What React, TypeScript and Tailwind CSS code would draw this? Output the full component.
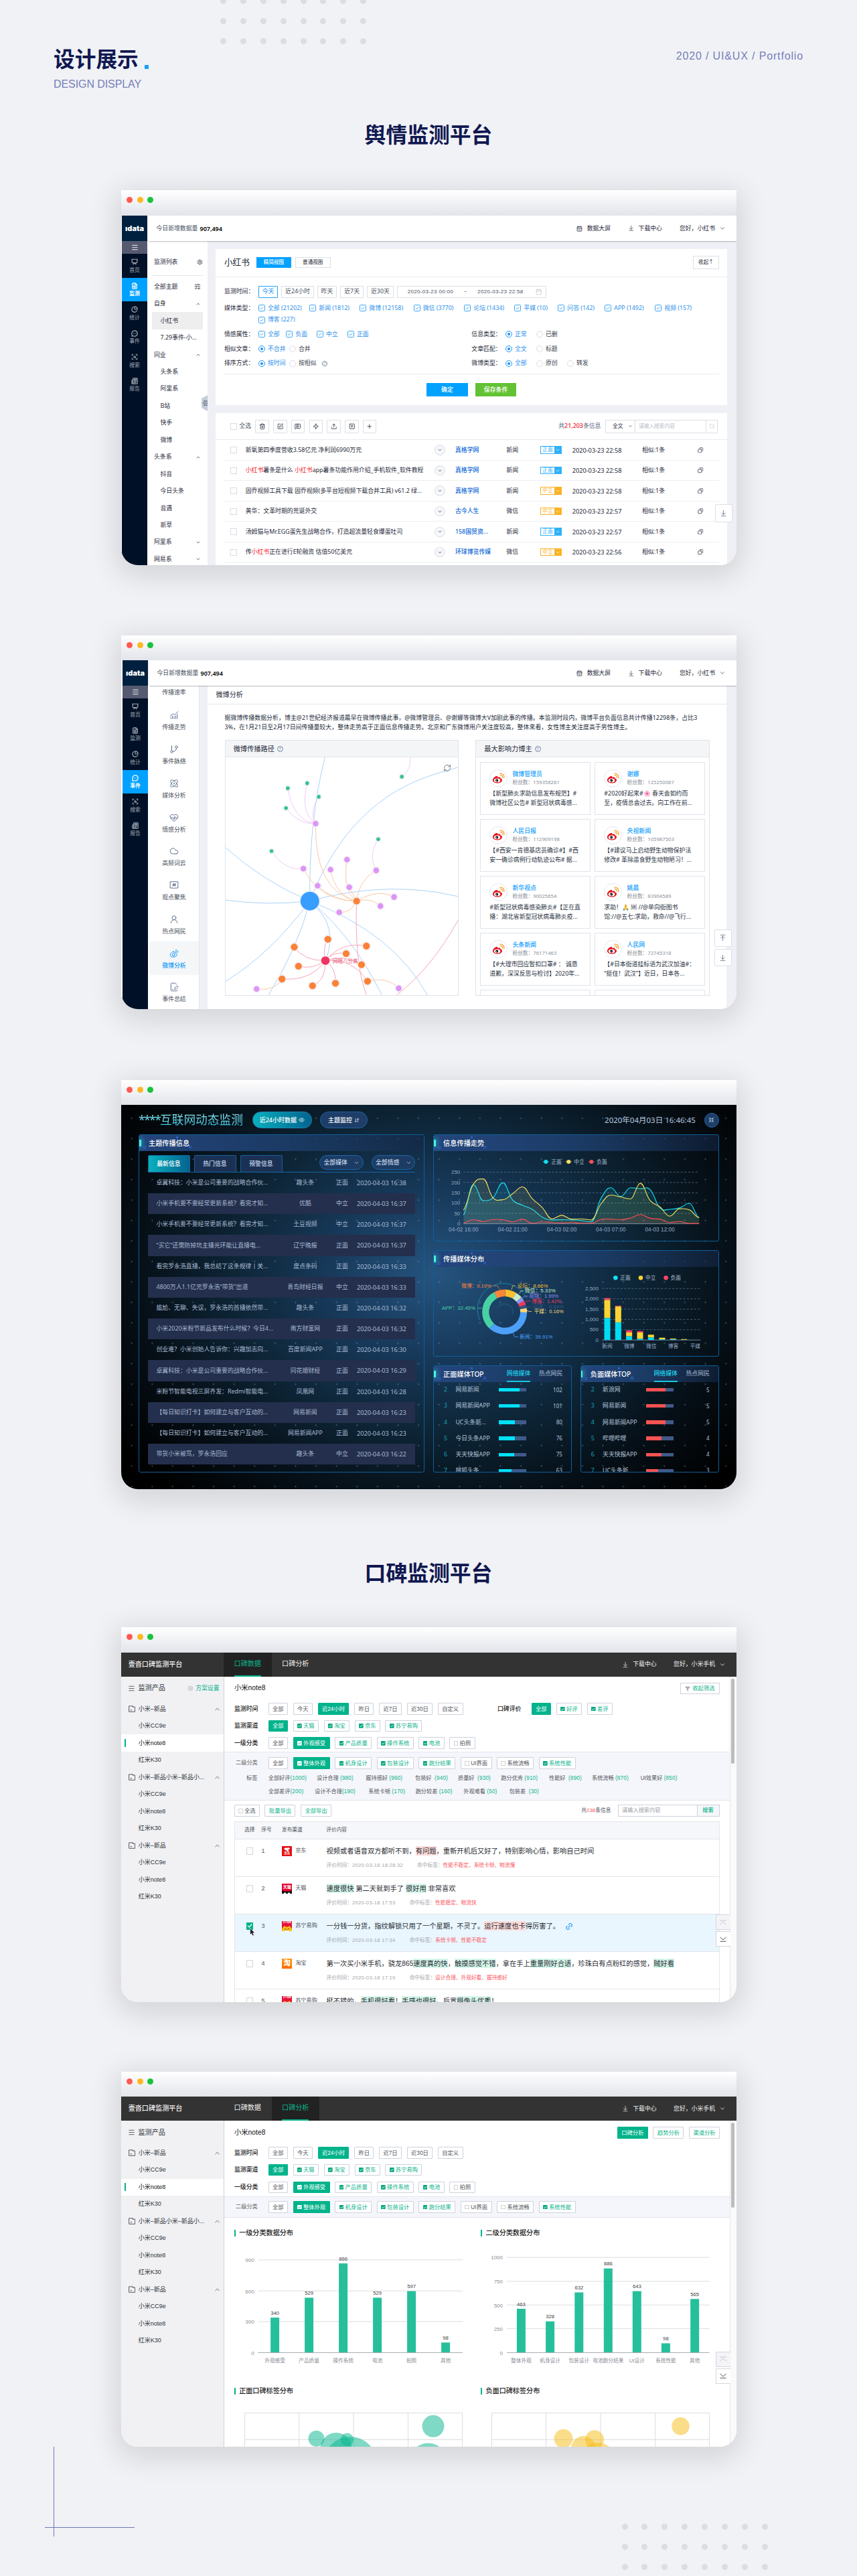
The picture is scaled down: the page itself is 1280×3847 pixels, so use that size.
import React from "react";
import {
  Menu, ChevronDown, ChevronUp, Settings, SlidersHorizontal, Trash2, SquarePen, MessageSquareText, Zap,
  Plus, Search, Calendar, Copy, RefreshCw, Presentation, ChartNoAxesCombined, Atom, HeartPulse,
  Cloud, UserRound, FilePenLine, GitBranch, Eye, ArrowDownUp, Shrink, Filter, Link2, ArrowDownToLine,
  ArrowUpToLine, Upload, SquareArrowUp, CalendarDays, FileText, ChartPie, Newspaper, ScanSearch, MessageCircleMore,
} from "lucide-react";

const row = "flex items-center whitespace-nowrap [&>*]:shrink-0";
const sansA = "font-['Noto_Sans','Noto_Sans_CJK_SC',sans-serif]";
const sansB = "font-['Liberation_Sans','Noto_Sans_CJK_SC',sans-serif]";

/* ---------- shared window frame ---------- */

function Frame({ className, chrome, body, children }: { className: string; chrome: string; body: string; children: React.ReactNode }) {
  return (
    <section className={`ml-[181px] w-[918.5px] rounded-b-[25px] shadow-[0_10px_42px_8px_rgba(0,0,0,0.12)] ${className}`}>
      <div className={`flex items-start gap-[6.5px] bg-gradient-to-b from-white to-[#e2e4eb] pl-[8px] pt-[10px] ${chrome}`}>
        <i className="size-[9px] rounded-full bg-[#ff5a50]" />
        <i className="size-[9px] rounded-full bg-[#fdb923]" />
        <i className="size-[9px] rounded-full bg-[#18c33c]" />
      </div>
      <div className={`relative overflow-hidden rounded-b-[25px] bg-white leading-none ${body}`}>{children}</div>
    </section>
  );
}

function DotGrid({ className, rows }: { className: string; rows: number }) {
  return (
    <div className={`absolute grid grid-cols-8 gap-x-[20.9px] gap-y-[20.9px] ${className}`}>
      {Array.from({ length: rows * 8 }, (_, i) => (
        <i key={i} className="size-[9px] rounded-full bg-[#dcdce4]" />
      ))}
    </div>
  );
}

/* ---------- idata shell ---------- */

const mainNav = [
  { name: "首页", Icon: Presentation },
  { name: "监测", Icon: FileText },
  { name: "统计", Icon: ChartPie },
  { name: "事件", Icon: MessageCircleMore },
  { name: "搜索", Icon: ScanSearch },
  { name: "报告", Icon: Newspaper },
];

function DataShell({ active, inset, children }: { active: string; inset: string; children: React.ReactNode }) {
  return (
    <div className={`flex h-full text-[#1f2a3a] ${sansA} ${inset}`}>
      <aside className="w-[38px] shrink-0 bg-[#001127]">
        <div className="flex h-[38px] items-center justify-center bg-[#00203f] font-['Inter',sans-serif] text-[11px] font-black text-white">
          <span>ıdata</span>
        </div>
        <div className="flex h-[19px] items-center justify-center bg-[#555a70]">
          <Menu className="size-[11px] text-[#d5d8e0]" strokeWidth={2.6} />
        </div>
        {mainNav.map(({ name, Icon }) => (
          <div
            key={name}
            className={`flex h-[35.5px] flex-col items-center gap-[3.5px] pt-[7px] text-[7.8px] ${
              name === active ? "bg-[#00a1ff] font-bold text-white" : "text-[#a4aab4]"
            }`}
          >
            <Icon className="size-[10px]" strokeWidth={2.8} />
            <span>{name}</span>
          </div>
        ))}
      </aside>
      <div className="flex min-w-0 flex-1 flex-col">
        <header className={`${row} relative z-10 ml-[2px] h-[38px] bg-white pl-[11.5px] text-[8.85px] shadow-[0_1px_1.5px_rgba(0,0,0,0.28)]`}>
          <span className="w-[65px] text-[#48525f]">今日新增数据量</span>
          <b className="text-[9px] font-semibold text-black">907,494</b>
          <span className="flex-1" />
          <CalendarDays className="mr-[6.5px] size-[9px]" />
          <span className="mr-[26px]">数据大屏</span>
          <ArrowDownToLine className="mr-[6px] size-[9.5px]" strokeWidth={1.6} />
          <span className="mr-[26px]">下载中心</span>
          <span className="mr-[6px]">您好，小红书</span>
          <ChevronDown className="mr-[15.5px] size-[10px]" strokeWidth={1.6} />
        </header>
        <div className="flex min-h-0 flex-1">{children}</div>
      </div>
    </div>
  );
}

/* ---------- window 1 ---------- */

const topics: [string, "up" | "down" | "item" | "on"][] = [
  ["自身", "up"], ["小红书", "on"], ["7.29事件-小...", "item"], ["同业", "up"], ["头条系", "item"], ["阿里系", "item"],
  ["B站", "item"], ["快手", "item"], ["微博", "item"], ["头条系", "up"], ["抖音", "item"], ["今日头条", "item"],
  ["音遇", "item"], ["新草", "item"], ["阿里系", "down"], ["网易系", "down"],
];

function Tick({ label, w }: { label: string; w: string }) {
  return (
    <span className={`${row} ${w} text-[#2b90ea]`}>
      <span className="mr-[4px] flex h-[10px] w-[10px] items-center justify-center rounded-[1.5px] border border-[#3aa6f2]">
        <svg viewBox="0 0 8 8" className="size-[6px]"><path d="M1 4l2 2 4-4" fill="none" stroke="#2196f3" strokeWidth="1.2" /></svg>
      </span>
      {label}
    </span>
  );
}

function Radio({ label, w, on }: { label: string; w: string; on?: boolean }) {
  return (
    <span className={`${row} ${w} ${on ? "text-[#2b90ea]" : "text-[#3b4450]"}`}>
      <span className={`mr-[4px] flex size-[10px] items-center justify-center rounded-full border ${on ? "border-[#2196f3]" : "border-[#d9dce4]"}`}>
        {on && <i className="size-[4px] rounded-full bg-[#1890ff]" />}
      </span>
      {label}
    </span>
  );
}

function Q({ className = "" }: { className?: string }) {
  return (
    <span className={`flex items-center justify-center rounded-full border border-current text-[#7484a0] ${className}`}>?</span>
  );
}

function R({ children }: { children: React.ReactNode }) {
  return <span className="text-[#f5222d]">{children}</span>;
}

const articles: [React.ReactNode, string, string, string, string][] = [
  ["新氧第四季度营收3.58亿元 净利润6990万元", "真格学网", "新闻", "正面", "22:58"],
  [<><R>小红书</R>薯条是什么 <R>小红书</R>app薯条功能作用介绍_手机软件_软件教程</>, "真格学网", "新闻", "正面", "22:58"],
  ["固乔视频工具下载 固乔视频(多平台短视频下载合并工具) v61.2 绿...", "真格学网", "新闻", "中立", "22:58"],
  ["黄华：文革时期的荒诞外交", "古今人生", "微信", "中立", "22:57"],
  ["汤姆猫与Mr.EGG蛋先生战略合作，打造超流量轻食爆蛋吐司", "158国贸资...", "新闻", "正面", "22:57"],
  [<>传<R>小红书</R>正在进行E轮融资 估值50亿美元</>, "环球博览传媒", "微信", "中立", "22:56"],
];

function MonitorWindow() {
  const btn = "flex h-[18px] items-center justify-center rounded-[1px] border border-[#dcdfe6] text-[#4a525e]";
  return (
    <Frame className="h-[560px]" chrome="h-[38px]" body="h-[522px]">
      <DataShell active="监测" inset="pl-[1px]">
        <div className="relative ml-[2px] w-[88px] shrink-0 bg-white text-[8.9px]">
          <div className={`${row} ml-[5px] h-[51.5px] w-[76px] border-b border-[#e4e6ea] pl-[3px] pt-[13px]`}>
            <span className="flex-1">监测列表</span>
            <Settings className="size-[9px]" strokeWidth={2} />
          </div>
          <div className={`${row} h-[29.5px] pl-[8px] pt-[4px]`}>
            <span className="w-[60px]">全部主题</span>
            <SlidersHorizontal className="size-[10px]" strokeWidth={2} />
          </div>
          {topics.map(([name, kind], i) => (
            <div
              key={i}
              className={`${row} ml-[5px] h-[25.45px] w-[76px] ${kind === "up" || kind === "down" ? "pl-[3px]" : "pl-[12.5px]"} ${kind === "on" ? "bg-[#eeeeef]" : ""}`}
            >
              <span className="flex-1">{name}</span>
              {kind === "up" && <ChevronUp className="mr-[3px] size-[8px]" />}
              {kind === "down" && <ChevronDown className="mr-[3px] size-[8px]" />}
            </div>
          ))}
          <svg viewBox="0 0 9 24" className="absolute right-0 top-[230px] h-[24px] w-[9px]">
            <path d="M9 0v24L0 19V5z" fill="#c6ccd8" />
            <path d="M3 9h6M5 12h4M3 15h6M4.500 10.500l-2 1.500 2 1.500" stroke="#3a4352" strokeWidth=".9" fill="none" />
          </svg>
        </div>
        <div className="flex-1 bg-[#eff0f5] pl-[12px] pt-[11.6px]">
          <div className="h-[233.2px] w-[764px] bg-white text-[8.9px]">
            <div className={`${row} h-[42px] border-b border-[#e8eaee] pl-[13px] pr-[12px]`}>
              <span className="w-[48px] text-[12.6px]">小红书</span>
              <span className="mr-[6px] flex h-[15.5px] w-[52px] items-center justify-center bg-[#00a1ff] text-[7.6px] font-medium text-white">精简视图</span>
              <span className="flex h-[15.5px] w-[52.5px] items-center justify-center border border-[#dcdfe6] text-[7.6px]">普通视图</span>
              <span className="flex-1" />
              <span className="flex h-[20.5px] w-[39px] items-center justify-center border border-[#dcdfe6] text-[7.6px]">收起↑</span>
            </div>
            <div className={`${row} h-[36px] pl-[13px] pt-[8px]`}>
              <span className="w-[51px]">监测时间：</span>
              <span className={`${btn} mr-[5.3px] w-[29px] border-[#22a4f5]! text-[#1890ff]!`}>今天</span>
              <span className={`${btn} mr-[5.3px] w-[48.4px]`}>近24小时</span>
              <span className={`${btn} mr-[5.3px] w-[29px]`}>昨天</span>
              <span className={`${btn} mr-[5.3px] w-[34.7px]`}>近7天</span>
              <span className={`${btn} mr-[5.6px] w-[39.4px]`}>近30天</span>
              <span className={`${row} h-[18px] w-[222.4px] border border-[#dcdfe6] pl-[14.5px] font-['Liberation_Sans',sans-serif] text-[8px] tracking-[0.32px] text-[#4a525e]`}>
                <span className="w-[84px]">2020-03-23 00:00</span>
                <span className="w-[20.500px]">~</span>
                <span className="w-[87px]">2020-03-23 22:58</span>
                <Calendar className="size-[9.500px] text-[#b8bcc6]" strokeWidth={1.6} />
              </span>
            </div>
            <div className={`${row} h-[21.600px] pl-[13px]`}>
              <span className="w-[51px]">媒体类型：</span>
              <Tick label="全部 (21202)" w="w-[76.3px]" />
              <Tick label="新闻 (1812)" w="w-[75px]" />
              <Tick label="微博 (12158)" w="w-[80.400px]" />
              <Tick label="微信 (3770)" w="w-[75.6px]" />
              <Tick label="论坛 (1434)" w="w-[75px]" />
              <Tick label="平媒 (10)" w="w-[65px]" />
              <Tick label="问答 (142)" w="w-[70px]" />
              <Tick label="APP (1492)" w="w-[75px]" />
              <Tick label="视频 (157)" w="w-[60px]" />
            </div>
            <div className={`${row} h-[13px] pl-[64px]`}>
              <Tick label="博客 (227)" w="w-[76px]" />
            </div>
            <div className={`${row} h-[27px] pl-[13px] pt-[3.600px]`}>
              <span className="w-[51px]">情感属性：</span>
              <Tick label="全部" w="w-[41.3px]" />
              <Tick label="负面" w="w-[45.700px]" />
              <Tick label="中立" w="w-[46px]" />
              <Tick label="正面" w="w-[185.3px]" />
              <span className="w-[50.7px]">信息类型：</span>
              <Radio on label="正常" w="w-[46px]" />
              <Radio label="已删" w="w-[46px]" />
            </div>
            <div className={`${row} h-[20.600px] pl-[13px]`}>
              <span className="w-[51px]">相似文章：</span>
              <Radio on label="不合并" w="w-[46px]" />
              <Radio label="合并" w="w-[272.3px]" />
              <span className="w-[50.7px]">文章匹配：</span>
              <Radio on label="全文" w="w-[46px]" />
              <Radio label="标题" w="w-[46px]" />
            </div>
            <div className={`${row} ml-[13px] h-[27.500px] w-[738.500px] border-b border-[#e8eaee] pb-[5px]`}>
              <span className="w-[51px]">排序方式：</span>
              <Radio on label="按时间" w="w-[46px]" />
              <Radio label="按相似" w="w-[49px]" />
              <Q className="size-[8px] text-[6px]" />
              <span className="w-[215.3px]" />
              <span className="w-[50.7px]">微博类型：</span>
              <Radio on label="全部" w="w-[46px]" />
              <Radio label="原创" w="w-[46px]" />
              <Radio label="转发" w="w-[46px]" />
            </div>
            <div className="flex gap-[11.300px] pl-[315.300px] pt-[12.700px] font-medium text-white">
              <span className="flex h-[20.400px] w-[61.300px] items-center justify-center bg-[#00a1ff]">确定</span>
              <span className="flex h-[20.400px] w-[61.300px] items-center justify-center bg-[#62c234]">保存条件</span>
            </div>
          </div>

          <div className="mt-[12.600px] h-[240px] w-[764px] bg-white text-[8.9px]">
            <div className={`${row} h-[40px] border-b border-[#e8eaee] pl-[22px]`}>
              <i className="mr-[3.300px] size-[10px] border border-[#d9dce4]" />
              <span className="w-[24px] text-[#4a525e]">全选</span>
              {[Trash2, SquarePen, MessageSquareText, Zap, Upload, SquareArrowUp, Plus].map((I, i) => (
                <span key={i} className="mr-[6.150px] flex size-[20.600px] items-center justify-center rounded-[1px] border border-[#dcdfe6]">
                  <I className="size-[9.500px]" />
                </span>
              ))}
              <span className="flex-1" />
              <span className="mr-[6.5px] text-[#5c6b84]">共<span className="font-medium text-[#f5121d]">21,203</span>条信息</span>
              <span className={`${row} mr-[14px] h-[20.700px] w-[168px] border border-[#dcdfe6] text-[7.700px]`}>
                <span className={`${row} h-full w-[44px] border-r border-[#dcdfe6] pl-[10px]`}>
                  <span className="w-[23px]">全文</span>
                  <ChevronDown className="size-[7px]" />
                </span>
                <span className="w-[105px] pl-[5px] text-[#b9bec9]">请输入搜索内容</span>
                <span className="flex h-full flex-1 items-center justify-center border-l border-[#dcdfe6]">
                  <Search className="size-[9px] text-[#c0c4cc]" strokeWidth={1.6} />
                </span>
              </span>
            </div>
            {articles.map(([title, src, type, mood, time], i) => (
              <div key={i} className={`${row} ml-[13px] h-[30.520px] w-[738.700px] border-b border-[#eceef2] pl-[9px]`}>
                <i className="mr-[12.700px] size-[10px] border border-[#d9dce4]" />
                <span className="w-[282.600px]">{title}</span>
                <span className="mr-[15.300px] flex size-[15.400px] items-center justify-center rounded-full border border-[#dadde6] bg-[#f6f7fa]">
                  <ChevronDown className="size-[8px]" />
                </span>
                <span className="w-[76.300px] font-medium text-[#0f6ad6]">{src}</span>
                <span className="w-[50.700px]">{type}</span>
                <span className={`flex h-[11.500px] w-[32px] border text-[7.700px] ${mood === "正面" ? "border-[#2fb1f8] text-[#2fb1f8]" : "border-[#fbb224] text-[#fbb224]"}`}>
                  <span className="flex flex-1 items-center justify-center">{mood}</span>
                  <span className={`flex w-[10px] items-center justify-center ${mood === "正面" ? "bg-[#2fb1f8]" : "bg-[#fbb224]"}`}>
                    <ChevronDown className="size-[8px] text-white" />
                  </span>
                </span>
                <span className="ml-[15.700px] w-[104.300px] text-[9.200px]">2020-03-23 {time}</span>
                <span className="w-[83px]">相似:1条</span>
                <Copy className="size-[8.500px] -scale-x-100" />
              </div>
            ))}
          </div>
        </div>
      </DataShell>
      <span className="absolute right-[5.500px] top-[431.400px] z-20 flex size-[26.400px] items-center justify-center rounded-[2px] border border-[#dcdfe6] bg-white">
        <ArrowDownToLine className="size-[11px] text-[#4a5672]" strokeWidth={1.6} />
      </span>
    </Frame>
  );
}

/* ---------- window 2 ---------- */

type IconProps = { className?: string; strokeWidth?: number };

function TopicBubble({ className, strokeWidth }: IconProps) {
  return (
    <svg viewBox="0 0 24 24" className={className} fill="none" stroke="currentColor" strokeWidth={strokeWidth} strokeLinejoin="round">
      <path d="M2 3h20v16h-8l-2 2-2-2H2z" />
      <path d="M11 7l-1.500 8M15 7l-1.500 8M8 9.500h9M7.500 12.500h9" />
    </svg>
  );
}

function WeiboOutline({ className, strokeWidth }: IconProps) {
  return (
    <svg viewBox="0 0 24 24" className={className} fill="none" stroke="currentColor" strokeWidth={strokeWidth} strokeLinecap="round">
      <path d="M10 7c-4 1.500-8 5-8 8.500C2 19 6 21 10.500 21s9-2.500 9-6c0-2-1.500-3-3.500-3.500.8-2.500-.5-3.500-4-2.300C12.500 7.500 12 6.500 10 7z" />
      <circle cx="10.500" cy="15" r="3.200" />
      <path d="M16 3c3.500-.5 6.500 2.500 5.800 6M15.800 6.300c1.700-.2 3 1 2.700 2.700" />
    </svg>
  );
}

const subNav = [
  { name: "传播走势", Icon: ChartNoAxesCombined },
  { name: "事件脉络", Icon: GitBranch },
  { name: "媒体分析", Icon: Atom },
  { name: "情感分析", Icon: HeartPulse },
  { name: "高频词云", Icon: Cloud },
  { name: "观点聚焦", Icon: TopicBubble },
  { name: "热点网民", Icon: UserRound },
  { name: "微博分析", Icon: WeiboOutline },
  { name: "事件总结", Icon: FilePenLine },
];

const bloggers = [
  ["微博管理员", "159358261", "【新型肺炎求助信息发布规范】#", "微博社区公告# 新型冠状病毒感..."],
  ["谢娜", "125250067", "#2020好起来#🌸 春天会如约而", "至，疫情总会过去。向工作在前..."],
  ["人民日报", "112909198", "【#西安一肯德基店员确诊#】#西", "安一确诊病例行动轨迹公布# 据..."],
  ["央视新闻", "105987503", "【#建议马上启动野生动物保护法", "修改# 革除滥食野生动物陋习！..."],
  ["新华视点", "90025654", "#新型冠状病毒感染肺炎#【正在直", "播：湖北省新型冠状病毒肺炎疫..."],
  ["姚晨", "83904589", "求助！🙏 🆘 //@单向街图书", "馆://@五七:求助，救命//@飞行..."],
  ["头条新闻", "76171463", "【#大理市回应暂扣口罩# ： 诚恳", "道歉，深深反思与检讨】2020年..."],
  ["人民网", "72745318", "【#日本街道挂标语为武汉加油#：", "“挺住！武汉”】近日，日本各..."],
];

function WeiboLogo() {
  return (
    <svg viewBox="0 0 27 27" className="size-[26.700px]">
      <circle cx="13.500" cy="13.500" r="13" fill="#fff" stroke="#dfe4ee" strokeWidth=".9" />
      <path d="M5 16.500c0-3 4-6.500 6.500-6.300 1.200.1 1.300 1 1 2 2-.8 4.500-.9 4 1.400 1.800.3 3 1.300 2.700 3-.4 2.300-3.500 4.200-7.200 4.200C8.300 20.800 5 19.200 5 16.500z" fill="#e6101b" />
      <ellipse cx="11.700" cy="16.600" rx="4.800" ry="3" fill="#fff" />
      <circle cx="11.200" cy="16.800" r="2.100" fill="#111" />
      <circle cx="10.500" cy="17.200" r=".7" fill="#fff" />
      <path d="M16.500 8.800c2-.3 3.700 1.500 3.100 3.500M15.800 6.300c3.800-.8 7.300 2.700 6.100 6.600" fill="none" stroke="#f79c23" strokeWidth="1.200" strokeLinecap="round" />
    </svg>
  );
}

const nodes: [number, number, number, string][] = [
  [1288, 586, 2.8, "#35bf98"], [776, 632, 2.8, "#35bf98"], [863, 612, 2.8, "#35bf98"], [915, 666, 2.8, "#35bf98"],
  [768, 711, 2.8, "#35bf98"], [1182, 835, 2.8, "#35bf98"], [703, 882, 2.8, "#35bf98"],
  [901, 773, 4.300, "#dd94f5"], [1042, 916, 4.300, "#dd94f5"], [846, 952, 4.300, "#dd94f5"], [968, 956, 4.300, "#dd94f5"],
  [1173, 959, 4.300, "#dd94f5"], [910, 1020, 4.300, "#dd94f5"], [1052, 1026, 4.300, "#dd94f5"], [1253, 1065, 4.300, "#dd94f5"],
  [1192, 1101, 4.300, "#dd94f5"], [1007, 1126, 4.300, "#dd94f5"], [636, 1431, 4.300, "#dd94f5"], [1274, 1428, 4.300, "#dd94f5"],
  [1085, 1081, 5.200, "#fb8138"], [956, 1233, 5.200, "#fb8138"], [805, 1264, 5.200, "#fb8138"], [1129, 1260, 5.200, "#fb8138"],
  [1038, 1290, 5.200, "#fb8138"], [824, 1340, 5.200, "#fb8138"], [1107, 1334, 5.200, "#fb8138"], [750, 1391, 5.200, "#fb8138"],
  [990, 1408, 5.200, "#fb8138"], [887, 1418, 5.200, "#fb8138"], [1134, 1400, 5.200, "#fb8138"],
  [945, 1318, 6.400, "#f0335f"], [875, 1081, 14, "#379dff"],
];

const edges: [string, string][] = [
  ["#a9d3fb", "M943 509Q870 760 875 1081M497 868Q660 1000 875 1081M497 1077Q680 1100 875 1081M497 1400Q700 1290 875 1081M690 1454Q820 1270 875 1081M875 1081Q1050 680 1440 575L1543 548M875 1081Q1160 1010 1440 1045L1543 1063M875 1081Q1250 1210 1402 1454M875 1081Q1060 1210 1198 1454M875 1081Q1010 1180 945 1318"],
  ["#efcdf9", "M1327 509Q1330 560 1288 586M776 632Q800 760 901 773M863 612Q830 730 901 773M915 666Q870 730 901 773M768 711Q820 775 901 773M1182 835Q1135 900 1173 959M703 882Q760 960 846 952"],
  ["#fbc9a8", "M901 773Q895 1040 1085 1081M846 952Q920 1080 1085 1081M968 956Q990 1060 1085 1081M910 1020Q980 1080 1085 1081M1042 916Q1020 1040 1085 1081M1052 1026L1085 1081M1173 959Q1095 1000 1085 1081M1085 1081Q1180 1030 1253 1065M1085 1081Q1150 1065 1192 1101M1085 1081Q1060 1130 1007 1126M636 1431Q720 1440 750 1391M1134 1400Q1220 1380 1274 1428"],
  ["#f6a6b8", "M945 1318Q850 1320 805 1264M945 1318Q930 1270 956 1233M945 1318Q890 1355 824 1340M945 1318Q880 1400 750 1391M945 1318Q945 1400 887 1418M945 1318Q995 1350 990 1408M945 1318Q980 1280 1038 1290M945 1318Q1020 1240 1129 1260M945 1318Q1070 1310 1134 1400M945 1318Q1030 1290 1107 1334M1085 1081Q1075 1330 1129 1454M1266 1454Q1420 1350 1543 1154"],
];

function SpreadGraph() {
  const sx = 348 / 1046;
  const sy = 355 / 946;
  return (
    <svg viewBox="0 0 348 355" className="h-[355px] w-[348px]">
      <g transform={`scale(${sx} ${sy}) translate(-497 -509)`} fill="none">
        {edges.map(([c, d]) => (
          <path key={c} d={d} stroke={c} strokeWidth="1" vectorEffect="non-scaling-stroke" />
        ))}
      </g>
      {nodes.map(([x, y, r, c], i) => (
        <g key={i}>
          <circle cx={(x - 497) * sx} cy={(y - 509) * sy} r={r + 1.200} fill="#fff" stroke="#d8d8dc" strokeWidth=".5" />
          <circle cx={(x - 497) * sx} cy={(y - 509) * sy} r={r} fill={c} />
        </g>
      ))}
      <text x={160} y={307} fontSize="7.500" fill="#e84a6c">网眼八分高</text>
    </svg>
  );
}

function WeiboWindow() {
  const float = "flex size-[26.300px] items-center justify-center rounded-[2px] border border-[#dcdfe6] bg-white";
  return (
    <Frame className="mt-[105px] h-[558px]" chrome="h-[37.300px]" body="h-[520.700px]">
      <DataShell active="事件" inset="pl-[2px]">
        <div className="ml-[2px] w-[74px] shrink-0 text-[8.9px] text-[#4c535e]">
          <div className="flex h-[26px] items-center justify-center pb-[5px]">传播速率</div>
          {subNav.map(({ name, Icon }) => (
            <div key={name} className={`flex h-[50.750px] flex-col items-center gap-[7px] pt-[11px] ${name === "微博分析" ? "bg-[#f4f6f8] font-medium text-[#139cf5]" : ""}`}>
              <Icon className={`size-[14px] ${name === "微博分析" ? "" : "text-[#60718f]"}`} strokeWidth={1.700} />
              <span>{name}</span>
            </div>
          ))}
        </div>
        <div className="w-[13px] shrink-0 border-l border-[#e2e5ee] bg-[#eff0f5]" />
        <div className="w-[775px] shrink-0 text-[8.9px]">
          <div className={`${row} h-[27.500px] border-b border-[#e4e6ea] pl-[12.500px] pb-[2px] text-[10.100px]`}>微博分析</div>
          <div className="whitespace-nowrap pl-[25.500px] pt-[13px] leading-[14px] tracking-[0.070px] text-[#222b3a]">
            <p>据微博传播数据分析，博主@21世纪经济报道最早在微博传播此事，@微博管理员、@谢娜等微博大V加剧此事的传播。本监测时段内，微博平台负面信息共计传播12298条，占比3</p>
            <p>3%，在1月21日至2月17日间传播量较大，整体走势高于正面信息传播走势。北京和广东微博用户关注度较高，整体来看，女性博主关注度高于男性博主。</p>
          </div>
          <div className="ml-[25.700px] mt-[12.500px] flex gap-[25.600px]">
            <div className="h-[382px] w-[349px] overflow-hidden border border-[#dfe3ec]">
              <div className={`${row} h-[25px] border-b border-[#e4e7ee] bg-[#f4f5f7] pl-[12px] text-[10.200px]`}>
                微博传播路径<Q className="ml-[4px] size-[9px] text-[7px]" />
              </div>
              <div className="relative">
                <SpreadGraph />
                <RefreshCw className="absolute right-[10px] top-[10px] size-[12px] text-[#555]" strokeWidth={1.500} />
              </div>
            </div>
            <div className="h-[382px] w-[349.500px] overflow-hidden border border-[#dfe3ec]">
              <div className={`${row} h-[25px] border-b border-[#e4e7ee] bg-[#f4f5f7] pl-[12px] text-[10.200px]`}>
                最大影响力博主<Q className="ml-[4px] size-[9px] text-[7px]" />
              </div>
              <div className="grid grid-cols-2 gap-x-[6.600px] gap-y-[6.500px] px-[6px] pt-[6.800px]">
                {bloggers.map(([name, fans, l1, l2]) => (
                  <div key={name} className="h-[78.600px] overflow-hidden border border-[#dfe3ec] pl-[13px] pt-[10px]">
                    <div className="flex gap-[7.500px]">
                      <WeiboLogo />
                      <div className="whitespace-nowrap pt-[3px]">
                        <p className="font-medium text-[#16a0fa]">{name}</p>
                        <p className="mt-[4px] text-[7.700px] text-[#8a8f98]">粉丝数：{fans}</p>
                      </div>
                    </div>
                    <div className="mt-[2px] whitespace-nowrap leading-[14.200px] text-[#27303e]">
                      <p>{l1}</p>
                      <p>{l2}</p>
                    </div>
                  </div>
                ))}
                <div className="h-[20px] border border-[#dfe3ec]" />
                <div className="h-[20px] border border-[#dfe3ec]" />
              </div>
            </div>
          </div>
        </div>
        <div className="flex-1 bg-[#eff0f5]" />
      </DataShell>
      <div className="absolute right-[6.500px] top-[401.400px] z-20 flex flex-col gap-[3px] text-[#4a5672]">
        <span className={float}><ArrowUpToLine className="size-[11px]" strokeWidth={1.600} /></span>
        <span className={float}><ArrowDownToLine className="size-[11px]" strokeWidth={1.600} /></span>
      </div>
    </Frame>
  );
}

/* ---------- window 3 ---------- */

const feed = [
  ["卓翼科技：小米是公司重要的战略合作伙...", "趣头条", "正面", "16:38"],
  ["小米手机要不要经常更新系统？看完才知...", "优酷", "中立", "16:37"],
  ["小米手机要不要经常更新系统？看完才知...", "土豆视频", "中立", "16:37"],
  ["“买它”还需防掉坑主播光环能让直播电...", "辽宁晚报", "正面", "16:37"],
  ["看完罗永浩直播，我总结了这条规律丨关...", "度点条码", "正面", "16:33"],
  ["4800万人1.1亿元罗永浩“带货”出道", "青岛财经日报", "中立", "16:33"],
  ["尴尬、无聊、失误，罗永浩的首播依然带...", "趣头条", "正面", "16:32"],
  ["小米2020米粉节新品发布什么时候？今日4...", "南方财富网", "正面", "16:32"],
  ["创业难？小米创始人告诉你：兴趣加志向...", "百度新闻APP", "正面", "16:30"],
  ["卓翼科技：小米是公司重要的战略合作伙...", "同花顺财经", "正面", "16:29"],
  ["米粉节智能电视三屏齐发：Redmi智能电...", "凤凰网", "正面", "16:28"],
  ["【每日知识打卡】如何建立与客户互动的...", "网易新闻", "正面", "16:23"],
  ["【每日知识打卡】如何建立与客户互动的...", "网易新闻APP", "正面", "16:23"],
  ["带货小米被骂，罗永浩回应", "趣头条", "中立", "16:22"],
];

function DarkPanel({ title, className, extra, children }: { title: string; className: string; extra?: React.ReactNode; children: React.ReactNode }) {
  return (
    <div className={`overflow-hidden rounded-[3px] border border-[#0f5f98] ${className}`}>
      <div className={`${row} relative h-[23.500px] bg-gradient-to-r from-[#24457c] via-[#1f4273cc] to-[#16294a88]`}>
        <i className="h-[10px] w-[2.500px] bg-[#48f5dc] shadow-[0_0_7px_2px_rgba(40,220,220,0.5)]" />
        <span className="ml-[11.500px] text-[10.200px] font-medium text-white">{title}</span>
        <i className="absolute left-[6px] top-[17px] size-[3.500px] border border-[#2c5fc0]" />
        <i className="absolute left-[74px] top-[15.500px] size-[4px] border border-[#2c5fc0]" />
        <i className="absolute left-[55px] top-[2px] size-[3px] bg-[#2c5fc0]" />
        {extra}
      </div>
      {children}
    </div>
  );
}

const cyanY = [523, 412, 470, 460, 405, 468, 487, 502, 530, 541, 540, 541, 543, 548, 462, 423, 455, 423, 427, 430, 497, 502, 497, 480, 532];
const yellowY = [505, 410, 391, 460, 467, 445, 420, 463, 495, 537, 524, 538, 537, 541, 482, 450, 457, 464, 407, 470, 493, 527, 500, 504, 532];
const redY = [552, 540, 547, 539, 540, 548, 538, 553, 548, 550, 552, 550, 553, 553, 539, 538, 540, 534, 521, 535, 538, 550, 547, 554, 554];

function smooth(ys: number[]) {
  const p = ys.map((y, i) => [(155 + i * 44 - 22) / 3, (y - 289) / 2.45]);
  let d = `M${p[0][0]} ${p[0][1]}`;
  for (let i = 0; i < p.length - 1; i++) {
    const a = p[i - 1] ?? p[i];
    const b = p[i];
    const c = p[i + 1];
    const e = p[i + 2] ?? c;
    const flat = (u: number[], v: number[], w: number[]) => ((v[1] - u[1]) * (w[1] - v[1]) <= 0 ? 0 : (w[1] - u[1]) / 5);
    const s1 = i === 0 ? (c[1] - b[1]) / 5 : flat(a, b, c);
    const s2 = flat(b, c, e);
    const h = (c[0] - b[0]) / 2.4;
    d += `C${b[0] + h} ${b[1] + s1} ${c[0] - h} ${c[1] - s2} ${c[0]} ${c[1]}`;
  }
  return d;
}

function TrendChart() {
  const X = (v: number) => (v - 22) / 3;
  const Y = (v: number) => (v - 289) / 2.45;
  const series = [["#12e2f5", cyanY, "正面", 524], ["#f8e05a", yellowY, "中立", 626], ["#fb4d55", redY, "负面", 728]] as const;
  return (
    <svg viewBox="0 0 426 135" className="h-[135px] w-[426px]" fontSize="7.700" fill="#93a7c2" fontFamily="Liberation Sans, Noto Sans CJK SC">
      {series.map(([c, , name, x]) => (
        <g key={name}>
          <path d={`M${X(x) - 4.500} ${Y(328)}h9`} stroke={c} strokeWidth=".8" />
          <circle cx={X(x)} cy={Y(328)} r="3" fill={c} />
          <text x={X(x) + 8} y={Y(328) + 2.800} fill="#b5c4d8">{name}</text>
        </g>
      ))}
      {[366, 404, 442, 479, 517].map((y) => (
        <path key={y} d={`M${X(155)} ${Y(y)}H${X(1210)}`} stroke="#5b728c" strokeWidth=".8" strokeDasharray="3 2.500" />
      ))}
      <path d={`M${X(155)} ${Y(555)}H${X(1210)}`} stroke="#8fa2b8" strokeWidth=".8" />
      {["250", "200", "150", "100", "50", "0"].map((t, i) => (
        <text key={t} x={X(140)} y={Y(366 + i * 37.600) + 2.800} textAnchor="end" fontSize="8">{t}</text>
      ))}
      {["04-02 16:00", "04-02 21:00", "04-03 02:00", "04-03 07:00", "04-03 12:00"].map((t, i) => (
        <text key={t} x={X(155 + i * 220)} y={Y(577) + 2.600} textAnchor="middle" fontSize="8.200" textLength="44.500">{t}</text>
      ))}
      {series.map(([c, ys, name]) => (
        <g key={name}>
          <path d={`${smooth([...ys])}V${Y(555)}H${X(155)}z`} fill={c} fillOpacity=".1" />
          <path d={smooth([...ys])} fill="none" stroke={c} strokeWidth="1.100" />
        </g>
      ))}
    </svg>
  );
}

const slices: [number, number, string][] = [
  [2, 31, "#fcbf2e"], [31, 49, "#c6ecc9"], [49, 60, "#8f8ff0"], [60, 71, "#f2385f"], [71, 80, "#34527f"],
  [80, 91, "#f9d777"], [91, 223, "#4da0f8"], [223, 332, "#48d2a4"], [332, 362, "#fb8538"],
];

function arc(a: number, b: number) {
  const cx = (339 - 22) / 3;
  const cy = (876 - 711) / 2.45;
  const pt = (deg: number, r: number) => {
    const t = (deg * Math.PI) / 180;
    return `${cx + r * Math.sin(t)} ${cy - r * Math.cos(t)}`;
  };
  const big = b - a > 180 ? 1 : 0;
  return `M${pt(a, 33.500)}A33.500 33.500 0 ${big} 1 ${pt(b, 33.500)}L${pt(b, 23.400)}A23.400 23.400 0 ${big} 0 ${pt(a, 23.400)}z`;
}

const pieLabels: [string, number, number, number, string, string][] = [
  ["微博：9.19%", 146, 779, 44.500, "#fb8538", "M318 793L305 780H288"],
  ["论坛：8.66%", 396, 779, 45.700, "#fcbf2e", "M370 795L375 780H386"],
  ["微信：5.33%", 429, 798, 46, "#c6ecc9", "M405 808L412 799H424"],
  ["视频：1.99%", 449, 817, 44, "#8f8ff0", "M418 826L428 818H444"],
  ["博客：1.42%", 461, 836, 44, "#f2385f", "M430 843L438 836H456"],
  ["问答：0.89%", 467, 855, 45.500, "#3b567f", "M434 858H462"],
  ["平媒：0.16%", 471, 873, 44, "#f9d777", "M438 870L448 874H460"],
  ["APP：32.45%", 57, 862, 50.300, "#48d2a4", "M238 862H218"],
  ["新闻：39.91%", 407, 967, 49, "#4da0f8", "M376 952L384 967H400"],
];

const stacks: [number, number, number, number][] = [
  [799, 825, 832, 898], [848, 853, 856, 914], [897, 943, 951, 965], [946, 946, 951, 974], [995, 959, 959, 969],
  [1045, 970, 970, 976], [1094, 973, 973, 976], [1143, 975, 975, 977.500],
];

function MediaCharts() {
  const X = (v: number) => (v - 22) / 3;
  const Y = (v: number) => (v - 711) / 2.45;
  return (
    <svg viewBox="0 0 426 135" className="h-[135px] w-[426px]" fontSize="7.700" fill="#93a7c2" fontFamily="Liberation Sans, Noto Sans CJK SC">
      {slices.map(([a, b, c]) => <path key={c} d={arc(a, b)} fill={c} />)}
      <path d={`M${X(228)} ${Y(905)}A38 38 0 0 1 ${X(438)} ${Y(826)}`} fill="none" stroke="#1a93b8" strokeWidth=".8" />
      <path d={`M${X(305)} ${Y(862)}A13 13 0 0 1 ${X(377)} ${Y(884)}`} fill="none" stroke="#2a6b96" strokeWidth=".8" />
      {pieLabels.map(([t, x, y, w, c, line]) => (
        <g key={t}>
          <g transform="scale(.33333 .40816) translate(-22 -711)">
            <path d={line} fill="none" stroke={c} strokeWidth=".8" vectorEffect="non-scaling-stroke" />
          </g>
          <text x={X(x)} y={Y(y) + 2.800} fill={c} textLength={w} lengthAdjust="spacingAndGlyphs">{t}</text>
        </g>
      ))}
      {([["#12e2f5", "正面", 836], ["#fbd333", "中立", 949], ["#fb4563", "负面", 1062]] as const).map(([c, n, x]) => (
        <g key={n}>
          <circle cx={X(x)} cy={Y(751)} r="3.300" fill={c} />
          <text x={X(x) + 7} y={Y(751) + 2.800} fill="#b5c4d8">{n}</text>
        </g>
      ))}
      {["2,500", "2,000", "1,500", "1,000", "500", "0"].map((t, i) => (
        <g key={t}>
          <text x={X(760)} y={Y(789.500 + i * 37.700) + 2.800} textAnchor="end" fontSize="8">{t}</text>
          <path d={`M${X(776)} ${Y(790 + i * 37.700)}H${X(1217)}`} stroke={i === 5 ? "#8fa2b8" : "#5b728c"} strokeWidth=".8" strokeDasharray={i === 5 ? "none" : "3 2.500"} />
        </g>
      ))}
      {stacks.map(([x, r, y, c]) => (
        <g key={x}>
          <rect x={X(x - 13.500)} width="9" y={Y(r)} height={Y(y) - Y(r)} fill="#fb4563" />
          <rect x={X(x - 13.500)} width="9" y={Y(y)} height={Y(c) - Y(y)} fill="#fbd333" />
          <rect x={X(x - 13.500)} width="9" y={Y(c)} height={Y(978) - Y(c)} fill="#00dcf5" />
        </g>
      ))}
      {["新闻", "微博", "微信", "博客", "平媒"].map((t, i) => (
        <text key={t} x={X(799 + i * 98.500)} y={Y(1000) + 2.800} textAnchor="middle">{t}</text>
      ))}
    </svg>
  );
}

function TopList({ rows, color }: { rows: [string, string, string, string][]; color: string }) {
  return (
    <div>
      {rows.map(([rank, name, w, value]) => (
        <div key={rank} className={`${row} h-[24.120px] pl-[15px] pr-[13px] text-[8.800px] text-[#b4c3d8]`}>
          <span className="w-[17.300px] text-[#12a3b5]">{rank}</span>
          <span className="w-[65px]">{name}</span>
          <span className="h-[5.300px] w-[40.700px] bg-[#405a88]">
            <i className={`block h-full ${w} ${color}`} />
          </span>
          <span className="flex-1 text-right text-[8px]">{value}</span>
        </div>
      ))}
    </div>
  );
}

const goodTop: [string, string, string, string][] = [
  ["2", "网易新闻", "w-[75%]", "102"], ["3", "网易新闻APP", "w-[75%]", "101"], ["4", "UC头条新...", "w-[59%]", "80"],
  ["5", "今日头条APP", "w-[57%]", "76"], ["6", "天天快报APP", "w-[56%]", "75"], ["7", "搜狐头条", "w-[46%]", "63"],
];
const badTop: [string, string, string, string][] = [
  ["2", "新浪网", "w-[71%]", "5"], ["3", "网易新闻", "w-[71%]", "5"], ["4", "网易新闻APP", "w-[71%]", "5"],
  ["5", "哔哩哔哩", "w-[57%]", "4"], ["6", "天天快报APP", "w-[57%]", "4"], ["7", "UC头条新...", "w-[43%]", "3"],
];

const topTabs = (
  <span className={`${row} absolute right-[12.500px] top-0 h-full gap-[12.500px] text-[8.900px] text-[#a9bbd6]`}>
    <span className="flex h-full items-center border-b-2 border-[#19c6e0] pt-[2px] font-medium text-[#1fd0e6]">网络媒体</span>
    <span>热点网民</span>
  </span>
);

function ScreenWindow() {
  const tab = "flex h-full w-[63px] items-center justify-center rounded-t-[2px] border border-b-0 border-[#17609b]";
  const select = `${row} h-[21.500px] w-[65.200px] rounded-full border border-[#1a66a8] bg-[#1d3c64] pl-[5px]`;
  return (
    <Frame className="mt-[105.500px] h-[612px]" chrome="h-[37.300px]" body="h-[574.700px]">
      <div className={`h-full bg-[radial-gradient(ellipse_58%_72%_at_51%_44%,#25547f_0%,#17395a_30%,#0d2435_58%,#061018_82%,#000_108%)] ${sansA}`}>
        <svg className="absolute inset-0 h-full w-full">
          <pattern id="cross" width="30.600" height="30.550" patternUnits="userSpaceOnUse" x="0.400" y="4.700">
            <path d="M13.800 15.300h3M15.300 13.800v3" stroke="#8fb0cf" strokeOpacity=".3" strokeWidth=".8" />
          </pattern>
          <rect width="100%" height="100%" fill="url(#cross)" />
        </svg>
        <div className="relative px-[26px]">
          <div className={`${row} h-[44.500px] pt-[1.500px] text-[9px] text-white`}>
            <span className="w-[170px] bg-gradient-to-b from-[#8ff3fb] to-[#1fb8d6] bg-clip-text py-[2px] text-[17.700px] text-transparent">
              <span className="inline-block w-[32px] tracking-[-1.700px]">****</span>互联网动态监测
            </span>
            <span className={`${row} h-[25px] w-[88.700px] justify-center gap-[3px] rounded-full border border-[#1c86b4] bg-gradient-to-r from-[#0bb0bd] to-[#04648f] font-medium`}>
              近24小时数据 <Eye className="size-[9px]" />
            </span>
            <span className={`${row} ml-[12.600px] h-[25px] w-[70.400px] justify-center gap-[3px] rounded-full border border-[#1f62a3] bg-[#1e3e68] font-medium`}>
              主题监控 <ArrowDownUp className="size-[8px]" />
            </span>
            <span className="flex-1" />
            <span className="mr-[13px] text-[11.500px] text-[#b9c9e2]">2020年04月03日 16:46:45</span>
            <span className="flex size-[21.700px] items-center justify-center rounded-full border border-[#1f62a3] bg-[#1e3e68]">
              <Shrink className="size-[9px] text-[#bcd3ee]" />
            </span>
          </div>
          <div className="flex justify-between">
            <DarkPanel title="主题传播信息" className="h-[504.500px] w-[426.700px]">
              <div className={`${row} mx-[12.500px] mt-[6.500px] h-[25.500px] border-b border-[#1565a3] text-[8.900px] font-medium text-[#c6d6ec]`}>
                <span className={`${tab} bg-gradient-to-r from-[#0bb0bd] to-[#04648f] text-white`}>最新信息</span>
                <span className={`${tab} ml-[6px] bg-[#1b3153]`}>热门信息</span>
                <span className={`${tab} ml-[6px] bg-[#1b3153]`}>预警信息</span>
                <span className="flex-1" />
                <span className={`${select} -mt-[3px] mr-[12.400px]`}><span className="w-[45px]">全部媒体</span><ChevronDown className="size-[9px]" /></span>
                <span className={`${select} -mt-[3px]`}><span className="w-[45px]">全部情感</span><ChevronDown className="size-[9px]" /></span>
              </div>
              {feed.map(([title, src, mood, time], i) => (
                <div key={i} className={`${row} mx-[12.500px] h-[31.200px] pl-[13px] text-[8.900px] text-[#a9b9d2] ${i % 2 ? "bg-[#232f4c]" : ""}`}>
                  <span className="w-[182.400px]">{title}</span>
                  <span className="w-[80px] text-center">{src}</span>
                  <span className="w-[30px] text-center">{mood}</span>
                  <span className="ml-[7px] text-[9.200px]">2020-04-03 {time}</span>
                </div>
              ))}
            </DarkPanel>
            <div className="w-[426.400px]">
              <DarkPanel title="信息传播走势" className="h-[159.300px]"><TrendChart /></DarkPanel>
              <DarkPanel title="传播媒体分布" className="mt-[13.700px] h-[158.500px]"><MediaCharts /></DarkPanel>
              <div className="mt-[13.400px] flex justify-between">
                <DarkPanel title="正面媒体TOP" className="h-[159.600px] w-[206.700px]" extra={topTabs}><TopList rows={goodTop} color="bg-[#00e0f5]" /></DarkPanel>
                <DarkPanel title="负面媒体TOP" className="h-[159.600px] w-[206.700px]" extra={topTabs}><TopList rows={badTop} color="bg-[#fb5252]" /></DarkPanel>
              </div>
            </div>
          </div>
        </div>
      </div>
    </Frame>
  );
}

/* ---------- windows 4 and 5 ---------- */

type ChipKind = "plain" | "fill" | "tick" | "fillTick" | "empty" | "green";

function Chip({ label, kind = "plain" }: { label: string; kind?: ChipKind }) {
  const fill = kind === "fill" || kind === "fillTick";
  const tone = fill ? "border-[#02b38b] bg-[#02b38b] text-white" : kind === "tick" || kind === "green" ? "border-[#cfd2dc] bg-white text-[#0bb38c]" : "border-[#cfd2dc] bg-white text-[#50545c]";
  return (
    <span className={`${row} h-[17.700px] rounded-[1px] border px-[5.400px] text-[8.300px] ${tone}`}>
      {(kind === "tick" || kind === "fillTick") && (
        <svg viewBox="0 0 7 7" className="mr-[2.300px] size-[6.700px]">
          <rect width="7" height="7" rx=".8" fill={fill ? "#fff" : "#02a881"} />
          <path d="M1.500 3.500l1.500 1.400 2.600-2.700" fill="none" stroke={fill ? "#02b38b" : "#fff"} strokeWidth="1" />
        </svg>
      )}
      {kind === "empty" && <i className="mr-[2.300px] size-[6.700px] border border-[#d0d2d8]" />}
      {label}
    </span>
  );
}

function ChipRow({ label, chips, className = "", labelClass = "font-medium text-[#222]" }: { label: string; chips: [string, ChipKind?][]; className?: string; labelClass?: string }) {
  return (
    <div className={`${row} gap-[7.600px] pl-[15px] ${className}`}>
      <span className={`w-[43px] text-[8.850px] ${labelClass}`}>{label}</span>
      {chips.map(([t, k]) => <Chip key={t} label={t} kind={k} />)}
    </div>
  );
}

function PraiseShell({ active, settings, children }: { active: number; settings?: boolean; children: React.ReactNode }) {
  const group = (name: string) => [[name, "group"], ["小米CC9e", ""], ["小米note8", ""], ["红米K30", ""]];
  const items = [...group("小米–新品"), ...group("小米–新品小米–新品小..."), ...group("小米–新品")];
  return (
    <div className={`flex h-full flex-col text-[#2d3138] ${sansB}`}>
      <header className={`${row} h-[35.700px] bg-[#333] text-[8.850px] text-[#f0f0f0]`}>
        <b className="w-[153px] pl-[10.700px] text-[10.100px] font-medium">壹沓口碑监测平台</b>
        {["口碑数据", "口碑分析"].map((t, i) => (
          <span key={t} className={`flex h-full w-[71.500px] justify-center text-[10.100px] ${active === i ? "bg-[#222] text-[#09b48c]" : ""}`}>
            <span className={`flex h-full items-center border-b-2 pt-[1px] ${active === i ? "border-[#09b48c]" : "border-transparent"}`}>{t}</span>
          </span>
        ))}
        <span className="flex-1" />
        <ArrowDownToLine className="mr-[6px] size-[10px]" strokeWidth={1.700} />
        <span className="mr-[25.500px]">下载中心</span>
        <span className="mr-[6px]">您好，小米手机</span>
        <ChevronDown className="mr-[15.500px] size-[10px]" />
      </header>
      <div className="flex min-h-0 flex-1">
        <aside className="w-[154px] shrink-0 border-r border-[#cdd0da] bg-[#f1f1f4] text-[9px]">
          <div className={`${row} h-[35.700px] pl-[10px] pr-[6.500px]`}>
            <Menu className="mr-[4.500px] size-[11px]" strokeWidth={1.600} />
            <span className="flex-1 text-[10.100px]">监测产品</span>
            {settings && <><Settings className="mr-[3px] size-[9px] text-[#a9adb8]" /><span className="text-[8.850px] text-[#0bb38c]">方案设置</span></>}
          </div>
          {items.map(([name, kind], i) => (
            <div key={i} className={`${row} h-[25.500px] ${i === 2 ? "bg-white text-[#111]" : ""}`}>
              {i === 2 ? <i className="ml-[5px] mr-[18.700px] h-[12px] w-[2px] bg-[#02b38b]" /> : kind ? (
                <svg viewBox="0 0 12 12" className="ml-[10.500px] mr-[5px] size-[10.200px]">
                  <path d="M.7 1h6.500l1.300 1.500h2.800v8.500H.7zM7.200 1v1.500h1.500M3 8h3" fill="none" stroke="#3c4048" />
                </svg>
              ) : <i className="w-[25.700px]" />}
              <span className="flex-1">{name}</span>
              {kind && <ChevronUp className="mr-[4.500px] size-[11px]" strokeWidth={1.500} />}
            </div>
          ))}
        </aside>
        <main className="w-[755px] shrink-0">{children}</main>
        <div className="flex-1 border-l border-[#e7e7ea] bg-[#fafafa] pl-[0.500px] pt-[3px]">
          <i className="block h-[127px] w-[5.500px] rounded-full bg-[#bcbcbe]" />
        </div>
      </div>
    </div>
  );
}

const timeChips: [string, ChipKind?][] = [["全部"], ["今天"], ["近24小时", "fill"], ["昨日"], ["近7日"], ["近30日"], ["自定义"]];
const channelChips: [string, ChipKind?][] = [["全部", "fill"], ["天猫", "tick"], ["淘宝", "tick"], ["京东", "tick"], ["苏宁易购", "tick"]];
const firstChips: [string, ChipKind?][] = [["全部"], ["外观感受", "fillTick"], ["产品质量", "tick"], ["操作系统", "tick"], ["电池", "tick"], ["拍照", "empty"]];
const secondChips: [string, ChipKind?][] = [["全部"], ["整体外观", "fillTick"], ["机身设计", "tick"], ["包装设计", "tick"], ["跑分结果", "tick"], ["UI界面", "empty"], ["系统流畅", "empty"], ["系统性能", "tick"]];

const tagsGood = [
  ["全部好评", "(1000)", "w-[72.300px]"], ["设计合理 ", "(980)", "w-[73.300px]"], ["握持感好 ", "(960)", "w-[73.700px]"], ["包装好  ", "(940)", "w-[64px]"],
  ["质量好  ", "(930)", "w-[64.300px]"], ["跑分优秀 ", "(910)", "w-[71.700px]"], ["性能好  ", "(890)", "w-[64px]"], ["系统流畅 ", "(870)", "w-[72.700px]"], ["UI效果好 ", "(850)", "w-[60px]"],
];
const tagsBad = [
  ["全部差评", "(200)", "w-[69.300px]"], ["设计不合理", "(190)", "w-[80.300px]"], ["系统卡顿 ", "(170)", "w-[70.400px]"],
  ["跑分较差 ", "(160)", "w-[71.600px]"], ["外观难看 ", "(50)", "w-[68.400px]"], ["包装差  ", "(30)", "w-[60px]"],
];

function TagRow({ tags, label }: { tags: string[][]; label: string }) {
  return (
    <div className={`${row} h-[20px] pl-[33px] text-[8.200px] text-[#50545c]`}>
      <span className="w-[32.700px]">{label}</span>
      {tags.map(([t, n, w]) => (
        <span key={t} className={`whitespace-pre ${w}`}>{t}<span className="tracking-[0.150px] text-[#0bb38c]">{n}</span></span>
      ))}
    </div>
  );
}

function P({ children }: { children: React.ReactNode }) {
  return <span className="bg-[#fcdcdb] py-[1.500px]">{children}</span>;
}
function G({ children }: { children: React.ReactNode }) {
  return <span className="bg-[#d5f6ea] py-[1.500px]">{children}</span>;
}

function ShopLogo({ name }: { name: string }) {
  if (name === "京东")
    return (
      <span className="flex size-[15px] flex-col items-center justify-end bg-[#e60f14] pb-[1px] text-[4.500px] font-bold text-white">
        <svg viewBox="0 0 12 8" className="h-[8px] w-[11px]"><path d="M1 3c2-2 4-2 6-1.500C9 .5 11 1.500 11 3L8.500 4 9 6l-2 1.500-1.500-2C4 5.500 3 5 2.500 4z" fill="#fff" /></svg>
        京东
      </span>
    );
  if (name === "天猫")
    return (
      <span className="flex size-[15px] flex-col items-center justify-between bg-[#e8002c] pt-[2.500px] text-[6px] font-bold text-white">
        天猫
        <svg viewBox="0 0 15 5" className="h-[5px] w-[15px]"><path d="M0 0l4 1.500h7L15 0v5H0z" fill="#111" /><path d="M3 5V3.500h3V5M9 5V3.500h3V5" fill="#fff" /></svg>
      </span>
    );
  if (name === "淘宝")
    return <span className="flex size-[15px] items-center justify-center bg-gradient-to-b from-[#ff9a1a] to-[#ff6a00] text-[10px] font-black text-white">淘</span>;
  return (
    <span className="flex size-[15px] flex-col items-center justify-between bg-[#e4123c] pt-[1.500px] text-[3px] font-bold text-white">
      苏宁易购
      <svg viewBox="0 0 15 10" className="h-[10px] w-[15px]">
        <path d="M0 10V6.500l3.500-4.500L6 3.500h3L11.500 2 15 6.500V10z" fill="#fdbb14" />
        <path d="M4 10c1-1.800 6-1.800 7 0z" fill="#fff" />
        <circle cx="5" cy="6.500" r=".7" fill="#222" /><circle cx="10" cy="6.500" r=".7" fill="#222" /><circle cx="7.500" cy="8.300" r=".7" fill="#222" />
      </svg>
    </span>
  );
}

const reviews: { shop: string; text: React.ReactNode; time: string; tags: string }[] = [
  { shop: "京东", text: <>视频或者语音双方都听不到，<P>有问题</P>，重新开机后又好了，特别影响心情，影响自己时间</>, time: "2020-03-18 18:28:32", tags: "性能不稳定、系统卡顿、物流慢" },
  { shop: "天猫", text: <><G>速度很快</G> 第二天就到手了 <G>很好用</G> 非常喜欢</>, time: "2020-03-18 17:53", tags: "性能稳定、物流快" },
  { shop: "苏宁易购", text: <>一分钱一分货，指纹解锁只用了一个星期，不灵了。<P>运行速度也卡</P>得厉害了。<Link2 className="ml-[8px] inline size-[12px] -rotate-45 text-[#1590f5]" /></>, time: "2020-03-18 17:34", tags: "系统卡顿、性能不稳定" },
  { shop: "淘宝", text: <>第一次买小米手机，骁龙865<G>速度真的快</G>，<G>触摸感觉不错</G>，拿在手上<G>重量刚好合适</G>，珍珠白有点粉红的感觉，<G>贼好看</G></>, time: "2020-03-18 17:19", tags: "设计合理、外观好看、握持感好" },
  { shop: "苏宁易购", text: <>挺不错的，<G>手机很好看</G>！<G>手感也很好</G>，后置<G>摄像头优秀</G>！</>, time: "2020-03-18 17:10", tags: "外观好看" },
];

function SideFloats({ className }: { className: string }) {
  return (
    <div className={`absolute right-[9px] z-10 flex w-[22px] flex-col gap-[2.300px] ${className}`}>
      <span className="flex h-[23px] items-center justify-center border border-r-0 border-[#d3d6e0] bg-[#f4f4f7]">
        <svg viewBox="0 0 10 8" className="h-[8px] w-[10px]"><path d="M.5 1h9M.5 7l4.500-4 4.500 4" fill="none" stroke="#bfc2ca" strokeWidth=".9" /></svg>
      </span>
      <span className="flex h-[23px] items-center justify-center border border-r-0 border-[#d3d6e0] bg-white">
        <svg viewBox="0 0 10 8" className="h-[8px] w-[10px]"><path d="M.5 7.300h9M.5 1l4.500 4 4.500-4" fill="none" stroke="#444" strokeWidth=".9" /></svg>
      </span>
    </div>
  );
}

function ReviewWindow() {
  return (
    <Frame className="h-[560px]" chrome="h-[38px]" body="h-[522.300px]">
      <PraiseShell active={0} settings>
        <div className={`${row} h-[35.700px] pl-[15px] pr-[15.500px]`}>
          <span className="flex-1 text-[10.300px] text-[#111]">小米note8</span>
          <span className={`${row} h-[17.700px] border border-[#cfd2dc] px-[6px] text-[8.300px] text-[#0bb38c]`}>
            <Filter className="mr-[3px] size-[8px] fill-[#a9adb8] text-[#a9adb8]" />收起筛选
          </span>
        </div>
        <div className={`${row} h-[25.400px]`}>
          <ChipRow label="监测时间" chips={timeChips} />
          <ChipRow label="口碑评价" chips={[["全部", "fill"], ["好评", "tick"], ["差评", "tick"]]} className="ml-[36.500px]" />
        </div>
        <ChipRow label="监测渠道" chips={channelChips} className="h-[25.400px]" />
        <ChipRow label="一级分类" chips={firstChips} className="h-[26px]" />
        <div className="h-[72.600px] border-y border-[#e3e6ee] bg-[#f5f6fb] pt-[6px]">
          <ChipRow label="二级分类" chips={secondChips} className="h-[20px]" labelClass="pl-[2px] text-[8.200px]! text-[#666]" />
          <div className="mt-[3px]"><TagRow tags={tagsGood} label="标签" /></div>
          <TagRow tags={tagsBad} label="" />
        </div>
        <div className={`${row} h-[31px] gap-[7.600px] pl-[14.500px] pr-[15.500px]`}>
          <Chip label="全选" kind="empty" />
          <Chip label="批量导出" kind="green" />
          <Chip label="全部导出" kind="green" />
          <span className="flex-1" />
          <span className="mr-[3px] text-[7.800px] text-[#50545c]">共<span className="text-[#fb5252]">238</span>条信息</span>
          <span className={`${row} h-[17.700px] w-[151.400px] border border-[#cfd2dc] text-[8.200px]`}>
            <span className="flex-1 pl-[5px] text-[#9a9ea8]">请输入搜索内容</span>
            <span className="flex h-full w-[33px] items-center justify-center border-l border-[#cfd2dc] bg-[#f5f7fa] font-medium text-[#0bb38c]">搜索</span>
          </span>
        </div>
        <div className="ml-[14.500px] w-[725.400px] border border-[#e3e6ea]">
          <div className={`${row} h-[25px] bg-[#f5f7fa] pl-[14.500px] text-[7.700px] text-[#50545c]`}>
            <span className="w-[25.300px]">选择</span>
            <span className="w-[30.700px]">序号</span>
            <span className="w-[66.300px]">发布渠道</span>
            <span>评价内容</span>
          </div>
          {reviews.map(({ shop, text, time, tags }, i) => (
            <div key={i} className={`relative flex h-[56.050px] whitespace-nowrap border-t border-[#e3e6ea] pl-[17px] ${i === 2 ? "bg-[#e9f6fe]" : ""}`}>
              <div className={`${row} h-[35px] w-[120px] text-[8.200px] text-[#50545c]`}>
                {i === 2 ? (
                  <span className="mr-[12.300px] flex size-[10.700px] items-center justify-center bg-[#02b38b]">
                    <svg viewBox="0 0 8 8" className="size-[8px]"><path d="M1 4l2.200 2 4-4.500" fill="none" stroke="#fff" strokeWidth="1.200" /></svg>
                  </span>
                ) : <i className="mr-[12.300px] size-[10.700px] rounded-[1px] border border-[#d0d2d8] bg-white" />}
                <span className="w-[30.700px] text-[9px]">{i + 1}</span>
                <ShopLogo name={shop} />
                <span className="ml-[5px]">{shop}</span>
              </div>
              <div className="pt-[1px]">
                <div className="flex h-[34px] items-center text-[10.250px] text-[#2a2d33]"><p>{text}</p></div>
                <p className="text-[7.700px] text-[#a4a7ae]">评价时间：<span className="tracking-[0.250px]">{time}</span><span className="ml-[21px]">命中标签：</span><span className="text-[#fb5a5f]">{tags}</span></p>
              </div>
              {i === 2 && (
                <svg viewBox="0 0 9 13" className="absolute left-[22px] top-[20px] h-[13px] w-[9px]">
                  <path d="M.6.600v9.800l2.200-2 1.500 3.600 1.900-.8-1.500-3.500h3z" fill="#161a2b" stroke="#fff" strokeWidth=".6" />
                </svg>
              )}
            </div>
          ))}
        </div>
      </PraiseShell>
      <SideFloats className="top-[391.200px]" />
    </Frame>
  );
}

function BarChart({ x0, x1, xl, ticks, bars }: { x0: number; x1: number; xl: number; ticks: [string, number][]; bars: [number, number, string, string][] }) {
  const Y = (v: number) => (v - 740) / 2.658;
  return (
    <svg viewBox="0 0 360 180" className="h-[180px] w-[360px]" fontSize="7.700" fill="#8b8e95" fontFamily="Liberation Sans, Noto Sans CJK SC">
      {ticks.map(([t, y], i) => (
        <g key={t}>
          <path d={`M${x0} ${Y(y)}H${x1}`} stroke={i === ticks.length - 1 ? "#a6a8ac" : "#dcdde0"} />
          <text x={xl} y={Y(y) + 3.300} textAnchor="end" fontSize="8">{t}</text>
        </g>
      ))}
      {bars.map(([x, y, v, name]) => (
        <g key={name}>
          <rect x={x - 6.500} width="13" y={Y(y)} height={Y(1152) - Y(y)} fill="#26bf9b" />
          <text x={x} y={Y(y - 19) + 2.900} textAnchor="middle" fontSize="7.700" fill="#3c3f45">{v}</text>
          <text x={x} y={Y(1184) + 3} textAnchor="middle">{name}</text>
        </g>
      ))}
    </svg>
  );
}

function Bubbles({ color, items }: { color: string; items: [number, number, number][] }) {
  return (
    <svg viewBox="0 0 326 52" className="h-[52px] w-[326px]">
      <path d="M.5 52V.5H325.500V52M81.700 .5V52M163 .5V52M244.500 .5V52M.5 40.300H325.500" fill="none" stroke="#dcdde0" />
      {items.map(([x, y, r], i) => <circle key={i} cx={x} cy={y} r={r} fill={color} fillOpacity=".52" />)}
    </svg>
  );
}

function ChartTitle({ children }: { children: string }) {
  return (
    <h3 className={`${row} h-[12px] text-[10.100px] font-medium text-[#1b1d22]`}>
      <i className="mr-[5.200px] h-[9.500px] w-[2px] bg-[#02b38b]" />{children}
    </h3>
  );
}

function AnalysisWindow() {
  return (
    <Frame className="mt-[103.700px] h-[560px]" chrome="h-[37.500px]" body="h-[522.500px]">
      <PraiseShell active={1}>
        <div className={`${row} h-[35.700px] gap-[7.600px] pl-[15px] pr-[15px]`}>
          <span className="flex-1 text-[10.300px] text-[#111]">小米note8</span>
          <Chip label="口碑分析" kind="fill" />
          <Chip label="趋势分析" kind="green" />
          <Chip label="渠道分析" kind="green" />
        </div>
        <ChipRow label="监测时间" chips={timeChips} className="h-[25.400px]" />
        <ChipRow label="监测渠道" chips={channelChips} className="h-[25.400px]" />
        <ChipRow label="一级分类" chips={firstChips} className="h-[26.300px]" />
        <ChipRow label="二级分类" chips={secondChips} className="h-[32.500px] border-y border-[#e3e6ee] bg-[#f5f6fb]" labelClass="pl-[2px] text-[8.200px]! text-[#666]" />
        <div className="flex pl-[15px] pt-[17px]">
          <div className="w-[368.300px]">
            <ChartTitle>一级分类数据分布</ChartTitle>
            <div className="mt-[17px]">
              <BarChart
                x0={35.300} x1={341} xl={29.600}
                ticks={[["900", 785], ["600", 908], ["300", 1030], ["0", 1153]]}
                bars={[[60.600, 1014, "340", "外观感受"], [111.600, 935, "529", "产品质量"], [162.600, 799, "866", "操作系统"], [213.600, 935, "529", "电池"], [264.600, 909, "597", "拍照"], [315.600, 1113, "98", "其他"]]}
              />
            </div>
            <div className="mt-[27px]"><ChartTitle>正面口碑标签分布</ChartTitle></div>
            <div className="ml-[15.300px] mt-[25.500px]">
              <Bubbles color="#0cb78f" items={[[107.500, 38.800, 12], [137, 53.500, 23.500], [153.500, 40.300, 9.700], [158, 76, 40], [282, 20.300, 16.500], [274.500, 74, 28.500]]} />
            </div>
          </div>
          <div>
            <ChartTitle>二级分类数据分布</ChartTitle>
            <div className="mt-[17px]">
              <BarChart
                x0={39} x1={341.700} xl={33}
                ticks={[["1000", 775], ["750", 870], ["500", 964], ["250", 1058], ["0", 1153]]}
                bars={[[60.400, 979, "463", "整体外观"], [103.600, 1029, "328", "机身设计"], [146.800, 914, "632", "包装设计"], [190.300, 819, "886", "电池跑分结果"], [233.300, 909, "643", "UI设计"], [276.400, 1116, "98", "系统性能"], [319.700, 940, "565", "其他"]]}
              />
            </div>
            <div className="mt-[27px]"><ChartTitle>负面口碑标签分布</ChartTitle></div>
            <div className="ml-[15.300px] mt-[25.500px]">
              <Bubbles color="#f5bd1c" items={[[107.500, 38.800, 14], [154, 40.300, 14], [137.300, 53, 17.900], [158.700, 74, 29], [282.500, 20.300, 13.200]]} />
            </div>
          </div>
        </div>
      </PraiseShell>
      <SideFloats className="top-[380.400px]" />
    </Frame>
  );
}

export default function App() {
  return (
    <div className={`relative h-[3847px] w-[1280px] overflow-hidden bg-[#f1f2f6] ${sansB}`}>
      <DotGrid className="left-[329px] top-[-3px]" rows={3} />
      <header className="flex h-[140px] items-start justify-between pl-[80px] pr-[80px] leading-none">
        <div className="pt-[73.500px]">
          <h1 className="flex items-end text-[31.700px] font-bold text-[#101850]">
            设计展示<i className="mb-[2px] ml-[9px] h-[6.500px] w-[6.500px] bg-[#18a0fb]" />
          </h1>
          <p className="mt-[13px] text-[16px] tracking-[-0.080px] text-[#7480b8]">DESIGN DISPLAY</p>
        </div>
        <p className="pt-[76px] text-[16px] tracking-[0.850px] text-[#7480b8]">2020 / UI&amp;UX / Portfolio</p>
      </header>
      <h2 className="h-[144px] pt-[46.500px] text-center text-[31.800px] font-bold leading-none text-[#101850]">舆情监测平台</h2>
      <MonitorWindow />
      <WeiboWindow />
      <ScreenWindow />
      <h2 className="h-[205.500px] pt-[110.500px] text-center text-[31.800px] font-bold leading-none text-[#101850]">口碑监测平台</h2>
      <ReviewWindow />
      <AnalysisWindow />
      <svg className="absolute left-[67px] top-[3654px] h-[134px] w-[134px]" viewBox="0 0 134 134">
        <path d="M13.500 0V134M0 120.500H134" stroke="#6d78b4" />
      </svg>
      <DotGrid className="left-[928.500px] top-[3769px]" rows={3} />
    </div>
  );
}
